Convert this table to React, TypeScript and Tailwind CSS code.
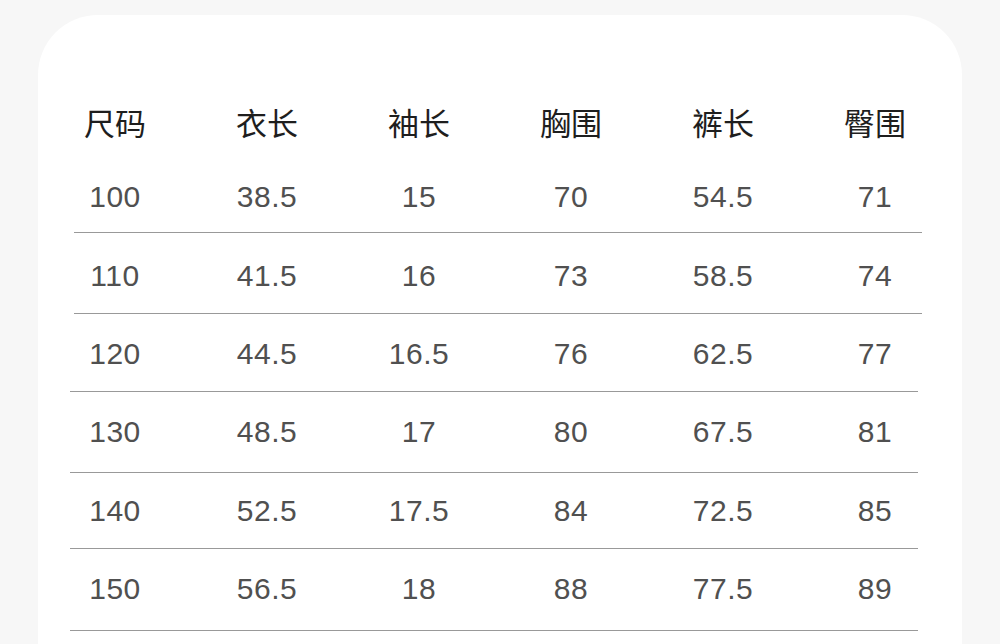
const headers = ["尺码", "衣长", "袖长", "胸围", "裤长", "臀围"]

const rows = [
  { cells: ["100", "38.5", "15", "70", "54.5", "71"], box: "h-[78px] pt-[25px]", line: "ml-[36px] w-[848px]" },
  { cells: ["110", "41.5", "16", "73", "58.5", "74"], box: "h-[80px] pt-[25px]", line: "ml-[36px] w-[848px]" },
  { cells: ["120", "44.5", "16.5", "76", "62.5", "77"], box: "h-[77px] pt-[22px]", line: "ml-[32px] w-[848px]" },
  { cells: ["130", "48.5", "17", "80", "67.5", "81"], box: "h-[80px] pt-[22px]", line: "ml-[32px] w-[848px]" },
  { cells: ["140", "52.5", "17.5", "84", "72.5", "85"], box: "h-[75px] pt-[20px]", line: "ml-[32px] w-[848px]" },
  { cells: ["150", "56.5", "18", "88", "77.5", "89"], box: "h-[81px] pt-[22px]", line: "ml-[32px] w-[848px]" },
]

export default function App() {
  return (
    <div className="h-[644px] w-[1000px] overflow-hidden bg-[#f7f7f7] pt-[15px] pl-[38px]">
      <div
        className="w-[924px] h-[700px] rounded-t-[60px] bg-white"
        style={{ fontFamily: '"Liberation Sans", "Noto Sans CJK SC", sans-serif' }}
      >
        {/* header */}
        <div className="grid grid-cols-[repeat(6,152px)] pl-px pt-[87px] pb-[12px]">
          {headers.map((h) => (
            <div key={h} className="text-center text-[31px] leading-[40px] text-[#1e1e1e]" style={{ fontFamily: '"Noto Sans CJK SC", sans-serif' }}>
              {h}
            </div>
          ))}
        </div>

        {rows.map((r, i) => (
          <div key={i}>
            <div className={`grid grid-cols-[repeat(6,152px)] pl-px ${r.box}`}>
              {r.cells.map((c, j) => (
                <div key={j} className="text-center text-[30px] leading-[36px] tracking-[0.5px] text-[#505050]">
                  {c}
                </div>
              ))}
            </div>
            <div className={`h-px bg-[#999999] ${r.line}`} />
          </div>
        ))}
      </div>
    </div>
  )
}
